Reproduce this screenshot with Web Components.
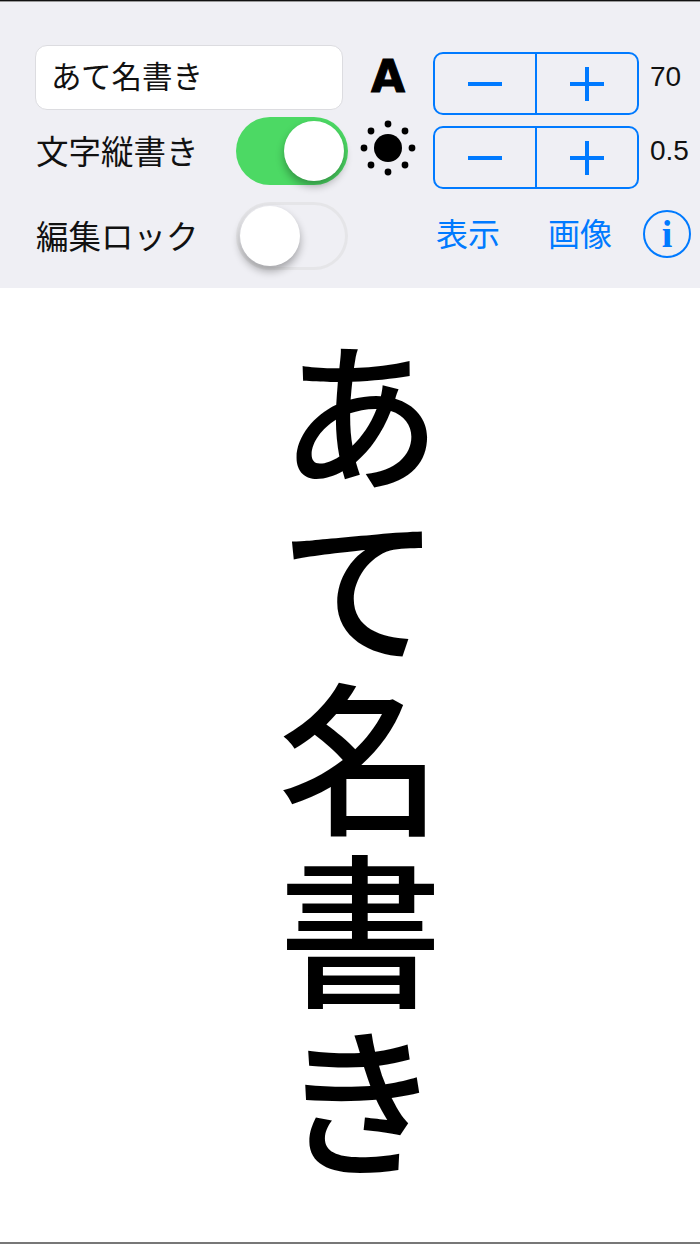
<!DOCTYPE html>
<html lang="ja">
<head>
<meta charset="utf-8">
<title>あて名書き</title>
<style>
    html, body { margin: 0; padding: 0; background: #fff; }
    body {
        width: 700px;
        height: 1244px;
        overflow: hidden;
        font-family: "Liberation Sans", "Noto Sans CJK JP", sans-serif;
    }
</style>
</head>
<body>
<app-screen></app-screen>

<script>
class IosSwitch extends HTMLElement {
    constructor() {
        super();
        this.attachShadow({ mode: 'open' });
    }

    connectedCallback() {
        this.shadowRoot.innerHTML = `
            <style>
                :host {
                    display: flex;
                    box-sizing: border-box;
                    width: 112px;
                    height: 68px;
                    padding: 4px;
                    border-radius: 34px;
                    background: transparent;
                    box-shadow: inset 0 0 0 3px #e5e5e8;
                }
                :host([on]) {
                    justify-content: flex-end;
                    background: #4cd964;
                    box-shadow: none;
                }
                .knob {
                    width: 60px;
                    height: 60px;
                    border-radius: 50%;
                    background: #fff;
                    box-shadow: 0 5px 9px rgba(0, 0, 0, 0.32);
                }
            </style>
            <div class="knob"></div>
        `;
    }
}

class IosStepper extends HTMLElement {
    constructor() {
        super();
        this.attachShadow({ mode: 'open' });
    }

    connectedCallback() {
        this.shadowRoot.innerHTML = `
            <style>
                :host {
                    display: flex;
                    box-sizing: border-box;
                    width: 206px;
                    height: 63px;
                    border: 2px solid #007aff;
                    border-radius: 10px;
                }
                .half {
                    flex: 1;
                    display: flex;
                    align-items: center;
                    justify-content: center;
                }
                .half + .half { border-left: 2px solid #007aff; }
                svg { width: 34px; height: 34px; }
                path { stroke: #007aff; stroke-width: 4; fill: none; }
            </style>
            <div class="half"><svg viewBox="0 0 34 34"><path d="M0 17H34"/></svg></div>
            <div class="half"><svg viewBox="0 0 34 34"><path d="M0 17H34M17 0V34"/></svg></div>
        `;
    }
}

class ControlPanel extends HTMLElement {
    constructor() {
        super();
        this.attachShadow({ mode: 'open' });
    }

    connectedCallback() {
        this.shadowRoot.innerHTML = `
            <style>
                :host {
                    display: grid;
                    box-sizing: border-box;
                    height: 288px;
                    padding: 44px 0 0 35px;
                    background: #efeff4;
                    border-top: 1px solid #111;
                    box-shadow: inset 0 1px #999;
                    grid-template-columns: 313px 1fr;
                    column-gap: 11px;
                    color: #111;
                }
                .left { display: flex; flex-direction: column; }
                .field {
                    box-sizing: border-box;
                    width: 308px;
                    height: 65px;
                    padding: 0 15px 6px;
                    display: flex;
                    align-items: center;
                    background: #fff;
                    border: 1px solid #dcdce0;
                    border-radius: 12px;
                    font-size: 30.5px;
                }
                .row {
                    display: flex;
                    align-items: center;
                    justify-content: space-between;
                    font-size: 32.5px;
                    padding-left: 1px;
                }
                .row span { padding-bottom: 4px; }
                .row.first { margin-top: 7px; }
                .row.second { margin-top: 17px; }
                .right { display: flex; flex-direction: column; padding-top: 7px; }
                .step-row { display: flex; height: 63px; margin-bottom: 11px; }
                .glyph { width: 58px; margin-right: 16px; display: flex; justify-content: center; flex: none; }
                .font-a {
                    font-family: "DejaVu Sans", sans-serif;
                    font-weight: 700;
                    font-size: 44px;
                    line-height: 50px;
                    color: #000;
                    -webkit-text-stroke: 1px #000;
                }
                .sun { margin-top: -6px; }
                .value { font-size: 28px; margin-left: 11px; align-self: center; margin-top: -14px; }
                .links {
                    display: flex;
                    align-items: center;
                    margin-top: 9px;
                    color: #007aff;
                    font-size: 32px;
                    padding-left: 77px;
                }
                .links span { padding-bottom: 4px; }
                .links span:nth-child(2) { margin-left: 48px; }
                .info { width: 48px; height: 48px; margin-left: 31px; flex: none; }
            </style>
            <div class="left">
                <div class="field">あて名書き</div>
                <div class="row first"><span>文字縦書き</span><ios-switch on></ios-switch></div>
                <div class="row second"><span>編集ロック</span><ios-switch></ios-switch></div>
            </div>
            <div class="right">
                <div class="step-row">
                    <div class="glyph"><span class="font-a">A</span></div>
                    <ios-stepper></ios-stepper>
                    <span class="value">70</span>
                </div>
                <div class="step-row">
                    <div class="glyph">
                        <svg class="sun" width="56" height="56" viewBox="0 0 56 56">
                            <circle cx="28" cy="28" r="14" fill="#000"/>
                            <g fill="#000">
                                <circle cx="28" cy="4" r="3.4"/>
                                <circle cx="28" cy="52" r="3.4"/>
                                <circle cx="4" cy="28" r="3.4"/>
                                <circle cx="52" cy="28" r="3.4"/>
                                <circle cx="11" cy="11" r="3.4"/>
                                <circle cx="45" cy="11" r="3.4"/>
                                <circle cx="11" cy="45" r="3.4"/>
                                <circle cx="45" cy="45" r="3.4"/>
                            </g>
                        </svg>
                    </div>
                    <ios-stepper></ios-stepper>
                    <span class="value">0.5</span>
                </div>
                <div class="links">
                    <span>表示</span>
                    <span>画像</span>
                    <svg class="info" viewBox="0 0 48 48">
                        <circle cx="24" cy="24" r="23" fill="none" stroke="#007aff" stroke-width="2"/>
                        <text x="24" y="37" text-anchor="middle" fill="#007aff" font-family="Liberation Serif" font-weight="700" font-size="38">i</text>
                    </svg>
                </div>
            </div>
        `;
    }
}

class PreviewText extends HTMLElement {
    constructor() {
        super();
        this.attachShadow({ mode: 'open' });
    }

    connectedCallback() {
        this.shadowRoot.innerHTML = `
            <style>
                :host {
                    display: flex;
                    justify-content: center;
                    box-sizing: border-box;
                    height: 956px;
                    padding: 47px 0 0 20px;
                    background: #fff;
                    border-bottom: 2px solid #777;
                }
                .text {
                    writing-mode: vertical-rl;
                    font-family: "Noto Sans CJK JP", sans-serif;
                    font-weight: 500;
                    font-size: 164px;
                    letter-spacing: 7.5px;
                    line-height: 1;
                    color: #000;
                    white-space: nowrap;
                }
            </style>
            <div class="text"><slot></slot></div>
        `;
    }
}

class AppScreen extends HTMLElement {
    constructor() {
        super();
        this.attachShadow({ mode: 'open' });
    }

    connectedCallback() {
        this.shadowRoot.innerHTML = `
            <style>
                :host { display: block; width: 700px; height: 1244px; }
            </style>
            <control-panel></control-panel>
            <preview-text>あて名書き</preview-text>
        `;
    }
}

customElements.define('ios-switch', IosSwitch);
customElements.define('ios-stepper', IosStepper);
customElements.define('control-panel', ControlPanel);
customElements.define('preview-text', PreviewText);
customElements.define('app-screen', AppScreen);
</script>
</body>
</html>
